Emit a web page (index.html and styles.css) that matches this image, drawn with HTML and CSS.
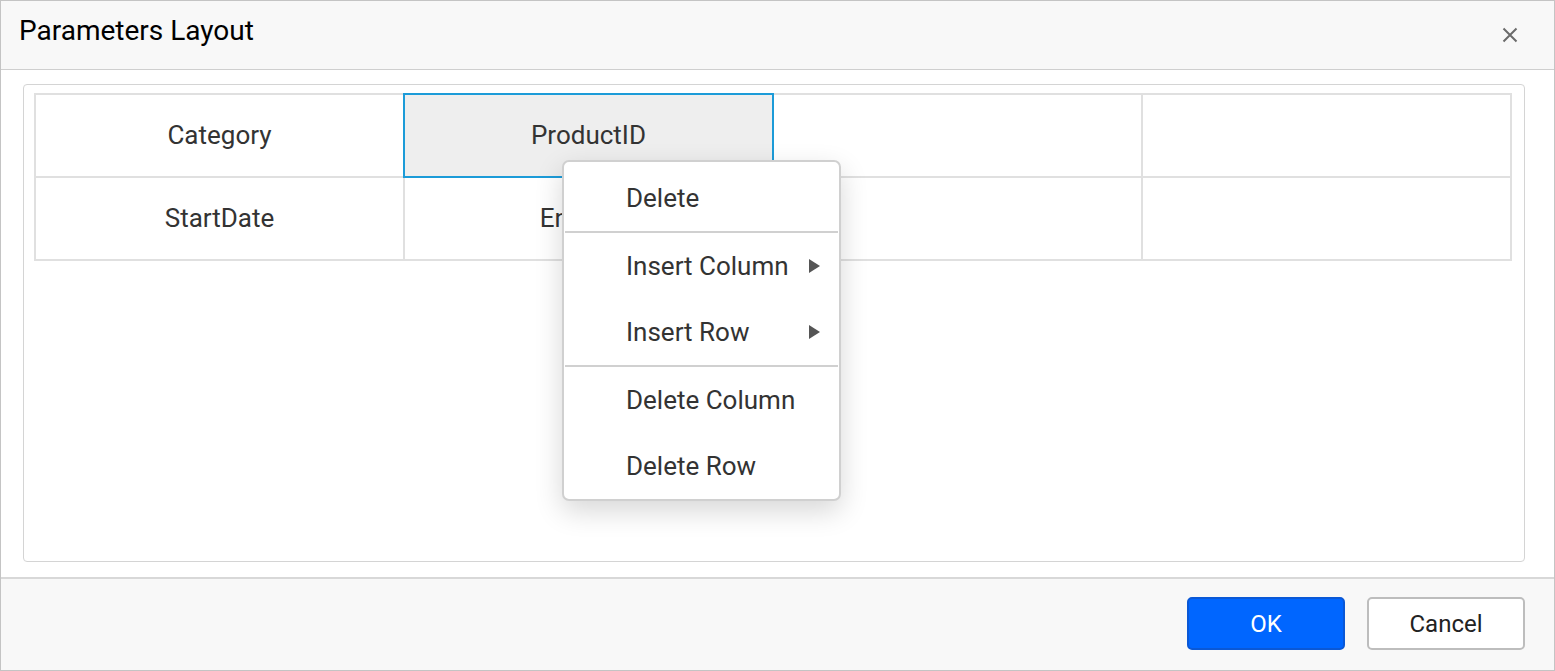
FILE: index.html
```html
<!DOCTYPE html>
<html>
<head>
<meta charset="utf-8">
<link rel="stylesheet" href="styles.css">
</head>
<body>
<div class="dialog">
  <div class="header">
    <div class="title">Parameters Layout</div>
    <svg class="close" width="18" height="18" viewBox="0 0 18 18"><path d="M2.5 2.5 L15.5 15.5 M15.5 2.5 L2.5 15.5" stroke="#6b6b6b" stroke-width="2" fill="none"/></svg>
  </div>
  <div class="content">
    <div class="panel">
      <div class="grid">
        <div class="cell">Category</div>
        <div class="cell selected">ProductID</div>
        <div class="cell"></div>
        <div class="cell"></div>
        <div class="cell">StartDate</div>
        <div class="cell">EndDate</div>
        <div class="cell"></div>
        <div class="cell"></div>
      </div>
    </div>
  </div>
  <div class="footer">
    <button class="btn primary">OK</button>
    <button class="btn">Cancel</button>
  </div>
  <div class="menu">
    <div class="item">Delete</div>
    <div class="sep"></div>
    <div class="item">Insert Column<span class="arrow"></span></div>
    <div class="item">Insert Row<span class="arrow"></span></div>
    <div class="sep"></div>
    <div class="item">Delete Column</div>
    <div class="item">Delete Row</div>
  </div>
</div>
</body>
</html>
```
FILE: styles.css
```css
* { box-sizing: border-box; }
html, body { margin: 0; padding: 0; background: #fff; }
body { font-family: Roboto, "Liberation Sans", sans-serif; }

.dialog {
  position: relative;
  width: 1555px;
  height: 671px;
  border: 1px solid #c4c4c4;
  display: flex;
  flex-direction: column;
}

.header {
  height: 69px;
  background: #f8f8f8;
  border-bottom: 1px solid #cfcfcf;
  display: flex;
  align-items: center;
  justify-content: space-between;
  padding: 0 35px 0 18px;
  flex: none;
}
.title { font-size: 28px; color: #000; margin-top: -9px; }
.close { display: block; margin-top: -1px; }

.content {
  flex: 1;
  padding: 14px 29px 15px 22px;
}
.panel {
  height: 100%;
  border: 1px solid #d4d4d4;
  border-radius: 4px;
  padding: 8px 10px 0 10px;
}
.grid {
  display: grid;
  grid-template-columns: repeat(4, 369px);
  grid-auto-rows: 83px;
  width: 1478px;
  border-top: 2px solid #e0e0e0;
  border-left: 2px solid #e0e0e0;
}
.cell {
  position: relative;
  border-right: 2px solid #e0e0e0;
  border-bottom: 2px solid #e0e0e0;
  display: flex;
  align-items: center;
  justify-content: center;
  font-size: 26px;
  color: #333;
  padding-bottom: 2px;
}
.cell.selected { background: #eeeeee; }
.cell.selected::after {
  content: "";
  position: absolute;
  left: -2px; top: -2px; right: -2px; bottom: -2px;
  border: 2px solid #1c9bd8;
}

.footer {
  height: 93px;
  flex: none;
  background: #f8f8f8;
  border-top: 2px solid #d8d8d8;
  display: flex;
  align-items: flex-start;
  justify-content: flex-end;
  gap: 22px;
  padding: 18px 29px 0 0;
}
.btn {
  width: 158px;
  height: 53px;
  border-radius: 5px;
  border: 2px solid #bdbdbd;
  background: #fff;
  color: #222;
  font-family: Roboto, "Liberation Sans", sans-serif;
  font-size: 24px;
  padding: 0;
}
.btn.primary {
  background: #0066ff;
  border-color: #0a58d6;
  color: #fff;
}

.menu {
  position: absolute;
  left: 561px;
  top: 159px;
  width: 279px;
  height: 341px;
  background: #fff;
  border: 2px solid #d0d0d0;
  border-radius: 7px;
  box-shadow: 0 10px 28px rgba(0,0,0,0.16);
  padding: 3px 1px 2px;
}
.item {
  position: relative;
  height: 66px;
  display: flex;
  align-items: center;
  padding-left: 61px;
  font-size: 26px;
  color: #333;
}
.sep { height: 2px; background: #d0d0d0; }
.arrow {
  position: absolute;
  left: 244px;
  top: 50%;
  margin-top: -7px;
  width: 0; height: 0;
  border-top: 7px solid transparent;
  border-bottom: 7px solid transparent;
  border-left: 11px solid #555;
}
```
